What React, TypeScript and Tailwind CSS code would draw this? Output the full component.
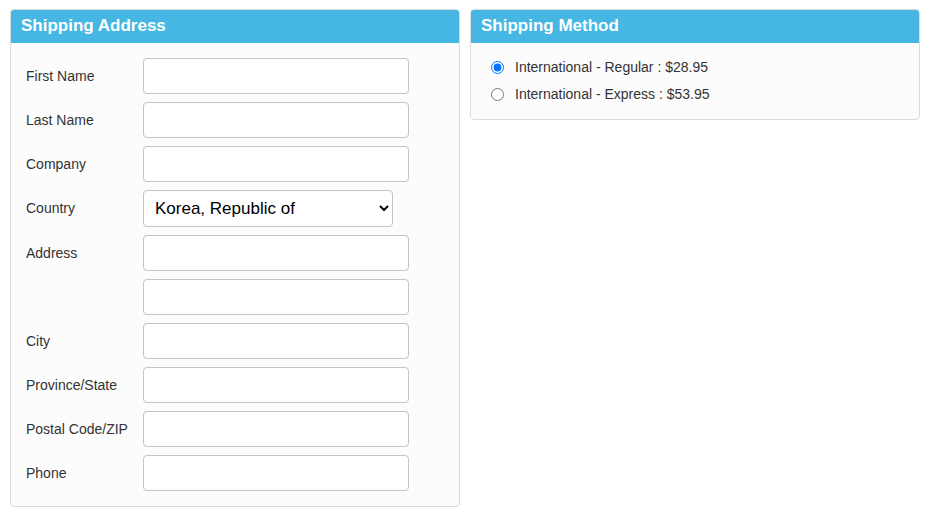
import React from 'react';

const fields = [
    { label: 'First Name' },
    { label: 'Last Name' },
    { label: 'Company' },
    { label: 'Country', select: true },
    { label: 'Address' },
    { label: '' },
    { label: 'City' },
    { label: 'Province/State' },
    { label: 'Postal Code/ZIP' },
    { label: 'Phone' },
];

const methods = [
    { id: 'regular', label: 'International - Regular : $28.95', checked: true },
    { id: 'express', label: 'International - Express : $53.95', checked: false },
];

const Panel = ({ title, children }: { title: string; children: React.ReactNode }) => (
    <div className="w-[450px] rounded-[4px] border border-[#dcdcdc] bg-[#fcfcfc] overflow-hidden">
        <div className="h-[34px] bg-[#45b7e2] -mx-px -mt-px px-[11px] flex items-center">
            <h2 className="text-white font-bold text-[17px]">{title}</h2>
        </div>
        {children}
    </div>
);

export default function App() {
    return (
        <div className="flex items-start gap-[10px] pt-[9px] pl-[10px] font-['Liberation_Sans',Arial,sans-serif] text-[#333]">
            <Panel title="Shipping Address">
                <div className="px-[15px] pt-[15px] pb-[15px] flex flex-col gap-[8px]">
                    {fields.map((f, i) => (
                        <div key={i} className="flex items-center">
                            <label className="w-[117px] text-[14px] text-[#333]">{f.label}</label>
                            {f.select ? (
                                <select
                                    defaultValue="KR"
                                    className="w-[250px] h-[37px] rounded-[4px] border border-[#c4c4c4] bg-white pl-[7px] pr-[6px] text-[17px] text-black"
                                >
                                    <option value="KR">Korea, Republic of</option>
                                </select>
                            ) : (
                                <input
                                    type="text"
                                    className="w-[266px] h-[36px] rounded-[4px] border border-[#c4c4c4] bg-white px-2 text-[14px] outline-none"
                                />
                            )}
                        </div>
                    ))}
                </div>
            </Panel>
            <Panel title="Shipping Method">
                <div className="px-[20px] pt-[15px] pb-[15px] flex flex-col gap-[8px]">
                    {methods.map((m) => (
                        <label key={m.id} className="flex items-center gap-[11px] text-[14px] text-[#333] h-[19px]">
                            <input type="radio" name="method" defaultChecked={m.checked} className="w-[13px] h-[13px] m-0" />
                            {m.label}
                        </label>
                    ))}
                </div>
            </Panel>
        </div>
    );
}
